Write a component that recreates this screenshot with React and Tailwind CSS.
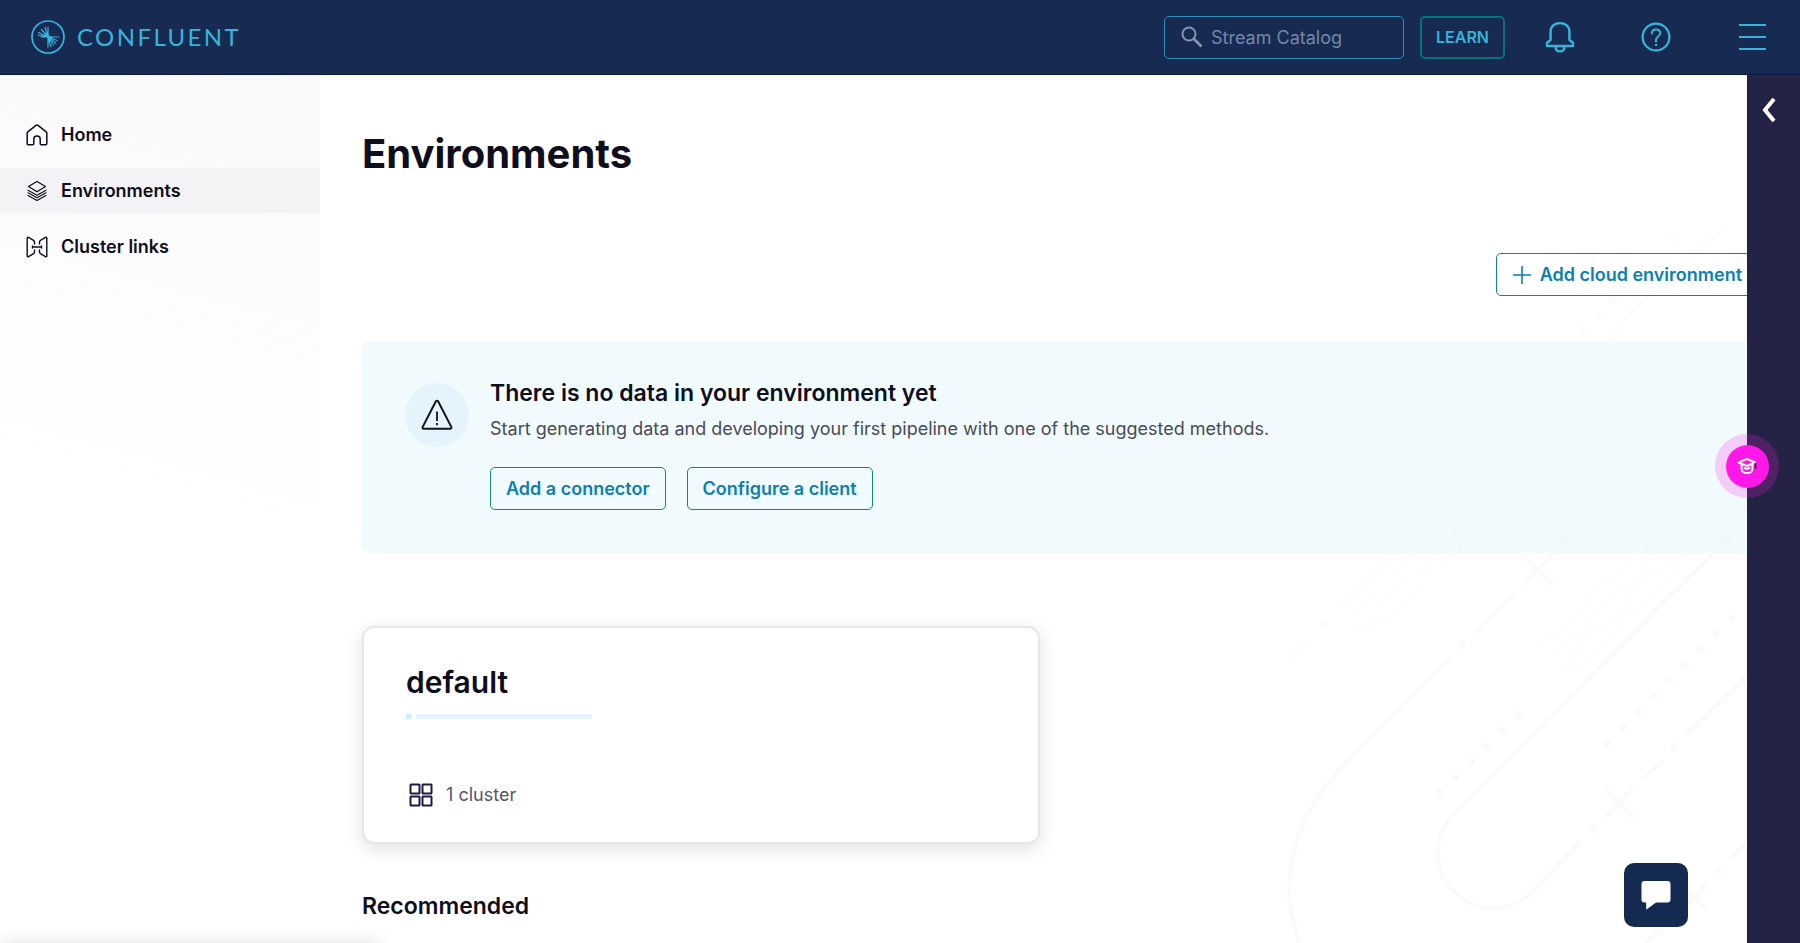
import React, { useState } from "react";

const navItems = [
  { name: "Home", icon: HomeIcon },
  { name: "Environments", icon: LayersIcon },
  { name: "Cluster links", icon: LinksIcon },
];

const environments = [{ name: "default", clusters: 1 }];

function Logo() {
  return (
    <svg width="34" height="34" viewBox="0 0 34 34" fill="none" stroke="currentColor">
      <circle cx="17" cy="17" r="16" strokeWidth="1.7" />
      <path
        d="M17 17V7M17 17L14 7.500M17 17L7.500 12.500M17 17L10.500 9.500M17 17L7 15M17 17H10M17 17V27M17 17L19.800 26.500M17 17L22.500 25M17 17L24.500 23M17 17L26 20.500M17 17H28"
        strokeWidth="1.200"
        strokeLinecap="round"
      />
      <path d="M13.500 14.500L17 12.500L18 16L22 17L19.500 19.500L17 18.500Z" fill="currentColor" stroke="none" />
    </svg>
  );
}

function HomeIcon() {
  return (
    <svg width="22" height="22" viewBox="0 0 22 22" fill="none" stroke="currentColor" strokeWidth="1.5" strokeLinejoin="round">
      <path d="M1.2 9.2C1.2 8.7 1.4 8.2 1.8 7.9L10 1.3a1.6 1.6 0 0 1 2 0l8.2 6.6c.4.3.6.8.6 1.3v10.600c0 .6-.4 1-1 1h-4.600c-.6 0-1-.4-1-1V15c0-1.800-1.200-2.900-3.200-2.900S7.800 13.200 7.800 15v4.800c0 .6-.4 1-1 1H2.200c-.6 0-1-.4-1-1z" />
    </svg>
  );
}

function LayersIcon() {
  return (
    <svg width="22" height="22" viewBox="0 0 22 22" fill="none" stroke="currentColor" strokeWidth="1.300" strokeLinejoin="round" strokeLinecap="round">
      <path d="M11 1.500l8.500 5-8.500 5.300-8.500-5.300z" />
      <path d="M2 10.200l9 5 9-5M2 12.800l9 5 9-5M2 15.400l9 5 9-5" strokeWidth="1.100" />
    </svg>
  );
}

function LinksIcon() {
  return (
    <svg width="22" height="22" viewBox="0 0 22 22" fill="none" stroke="currentColor" strokeWidth="1.400" strokeLinejoin="round" strokeLinecap="round">
      <path d="M8.500 8V6.200c0-.8-.4-1.500-1-1.900L2.600 1.400C1.800.9 1.200 1.300 1.200 2.100v17.800c0 .8.6 1.200 1.400.7l4.900-2.900c.6-.4 1-1.100 1-1.900V14" />
      <path d="M13.500 8V6.200c0-.8.4-1.500 1-1.900l4.900-2.900c.8-.5 1.400-.1 1.400.7v17.800c0 .8-.6 1.200-1.400.7l-4.900-2.900c-.6-.4-1-1.100-1-1.900V14" />
      <path d="M6.500 11h9M6.500 10v2M15.500 10v2" />
    </svg>
  );
}

function SearchIcon() {
  return (
    <svg width="22" height="22" viewBox="0 0 22 22" fill="none" stroke="currentColor" strokeWidth="2" className="shrink-0">
      <circle cx="8" cy="8" r="6.5" />
      <path d="M12.500 12.500L20.500 20.500" strokeWidth="2.600" />
    </svg>
  );
}

function BellIcon() {
  return (
    <svg width="30" height="32" viewBox="0 0 30 32" fill="none" stroke="currentColor" strokeWidth="2.400" strokeLinejoin="round">
      <path d="M2 25v-3.200l3.600-2.800V10.500C5.600 5.500 9.500 2 15 2s9.400 3.500 9.400 8.500V19l3.600 2.800V25z" />
      <path d="M10.500 25c0 3.200 1.700 5.400 4.500 5.400s4.500-2.200 4.500-5.400" />
    </svg>
  );
}

function HelpIcon() {
  return (
    <svg width="30" height="30" viewBox="0 0 30 30" fill="none" stroke="currentColor" strokeWidth="2.200">
      <circle cx="15" cy="15" r="13.400" />
      <path d="M10.800 11.400c0-2.400 1.700-4 4.200-4s4.300 1.500 4.300 3.800c0 3.400-4.300 3.200-4.300 6.600v1.700" strokeWidth="2" strokeLinecap="round" />
      <path d="M15 22v2" />
    </svg>
  );
}

function WarningIcon() {
  return (
    <svg width="32" height="32" viewBox="0 0 32 32" fill="none" stroke="currentColor" strokeWidth="2" strokeLinejoin="round">
      <path d="M14.900 2.300c.5-.9 1.700-.9 2.200 0l13.200 25.600c.4.900-.1 1.900-1.200 1.900H2.900c-1.100 0-1.600-1-1.200-1.900z" />
      <path d="M16 12.500v9.500M16 24v2.200" strokeWidth="1.800" />
    </svg>
  );
}

function ClusterIcon() {
  return (
    <svg width="24" height="24" viewBox="0 0 24 24" fill="none" stroke="currentColor" strokeWidth="2">
      <rect x="1.500" y="1.500" width="9" height="9" rx="0.500" />
      <rect x="13.500" y="1.500" width="9" height="9" rx="0.500" />
      <rect x="1.500" y="13.500" width="9" height="9" rx="0.500" />
      <rect x="13.500" y="13.500" width="9" height="9" rx="0.500" />
    </svg>
  );
}

function CapIcon() {
  return (
    <svg width="20" height="18" viewBox="0 0 20 18" fill="none" stroke="currentColor" strokeWidth="2" strokeLinejoin="round">
      <path d="M1.500 5.500L10 1.800l8 3.700L10 9z" />
      <path d="M4.600 7v5.200C4.600 14.500 7 16 10 16s5.400-1.500 5.400-3.800V7" />
      <path d="M7 10.500c1 1.500 5 1.500 6 0" />
      <path d="M18.500 6v6" stroke="#5b1a5e" />
    </svg>
  );
}

function ChatIcon() {
  return (
    <svg width="30" height="30" viewBox="0 0 30 30" fill="currentColor">
      <path d="M3.500 1h23A3 3 0 0 1 29.500 4v15.500a3 3 0 0 1-3 3H15L5.200 29.800V22.500H3.500a3 3 0 0 1-3-3V4a3 3 0 0 1 3-3z" />
    </svg>
  );
}

// rows of small dots running diagonally up to the right
function Dots({ rows, count, step, r }) {
  return rows.map(([x, y]) =>
    Array.from({ length: count }, (_, i) => (
      <circle key={`${x}-${i}`} cx={x + i * step} cy={y - i * step} r={r} fill="currentColor" stroke="none" />
    ))
  );
}

function Squares({ x, y, count }) {
  return Array.from({ length: count }, (_, i) => (
    <path key={i} d={`M${x + i * 15.6} ${y - i * 15.6}m-5 0l5-5 5 5-5 5z`} fill="currentColor" stroke="none" />
  ));
}

function Backdrop() {
  return (
    <svg
      className="absolute right-0 top-0 pointer-events-none text-black/[0.02]"
      width="600"
      height="868"
      viewBox="1200 75 600 868"
      fill="none"
      stroke="currentColor"
      strokeWidth="4"
      aria-hidden="true"
    >
      <path d="M1299 943C1292 918 1289 904 1289 892C1289 840 1312 797 1345 764L1450 658M1475 632L1515 594" />
      <path d="M1523 556L1552 584M1552 556L1523 584" />
      <path d="M1712 554L1454 814A55 55 0 0 0 1532 892L1581 841M1642 780L1663 760M1686 735L1746 677" />
      <path d="M1605 788L1633 817M1633 788L1605 817" />
      <path d="M1680 911L1708 883M1680 883L1708 911M1731 858L1746 843M1645 943L1663 929" />
      <circle cx="1462" cy="645" r="4" fill="currentColor" stroke="none" />
      <circle cx="1593" cy="829" r="4" fill="currentColor" stroke="none" />
      <circle cx="1674" cy="747" r="4" fill="currentColor" stroke="none" />
      <circle cx="1719" cy="870" r="4" fill="currentColor" stroke="none" />
      <Squares x={1440} y={793} count={6} />
      <Squares x={1607} y={743} count={9} />
      <g opacity="0.5">
        <path d="M1561 545L1626 481M1342 607L1470 480M1288 660L1308 643M1605 340L1640 303L1722 230M1726 525L1746 506" strokeWidth="3" />
        <circle cx="1325" cy="624" r="3" fill="currentColor" stroke="none" />
        <circle cx="1725" cy="539" r="4" fill="currentColor" stroke="none" />
        <Dots rows={[[1543, 647], [1558, 652], [1562, 666], [1576, 671]]} count={14} step={9.4} r={2} />
        <Dots rows={[[1356, 612], [1360, 626], [1375, 631]]} count={11} step={9.4} r={1.6} />
        <Dots rows={[[1582, 331]]} count={3} step={15.6} r={4} />
        <circle cx="1674" cy="238" r="4" fill="currentColor" stroke="none" />
      </g>
    </svg>
  );
}

function OutlineButton({ children }) {
  return (
    <button className="flex h-[43px] shrink-0 items-center gap-2 rounded-[5px] border border-[#12838d] px-[15px] text-lg font-semibold text-[#0a80b3] hover:bg-[#e3f5fb]">
      {children}
    </button>
  );
}

function Header() {
  return (
    <header className="flex h-[75px] shrink-0 items-center justify-between border-b border-[#0b1740] bg-[#172b52] pl-[31px] pr-[34px] text-[#38b4da]">
      <a href="#home" className="flex items-center gap-3">
        <Logo />
        <span className="font-['Lato',sans-serif] text-2xl leading-none tracking-widest">CONFLUENT</span>
      </a>
      <div className="flex items-center">
        <label className="flex h-[43px] w-60 items-center gap-2 rounded-[5px] border border-[#2f8fb8] px-4 text-[#8494ae]">
          <SearchIcon />
          <input
            aria-label="Stream Catalog"
            placeholder="Stream Catalog"
            className="w-full min-w-0 bg-transparent pt-0.5 text-lg outline-none placeholder:text-[#7487a6]"
          />
        </label>
        <button className="ml-4 h-[43px] w-[85px] rounded-[5px] border-2 border-[#08707c] text-base font-semibold">
          LEARN
        </button>
        <button aria-label="Notifications" className="ml-10">
          <BellIcon />
        </button>
        <button aria-label="Help" className="ml-[66px]">
          <HelpIcon />
        </button>
        <button aria-label="Menu" className="ml-[68px] flex w-[27px] flex-col gap-[10px]">
          <span className="h-0.5 w-full bg-current" />
          <span className="h-0.5 w-full bg-current" />
          <span className="h-0.5 w-full bg-current" />
        </button>
      </div>
    </header>
  );
}

function Sidebar({ active, onSelect }) {
  return (
    <aside className="w-80 shrink-0 bg-linear-195 from-[#f9f9fb] to-white to-50% pt-[37px]">
      <nav className="flex flex-col gap-[11px]">
        {navItems.map((item) => (
          <a
            key={item.name}
            href="#"
            onClick={() => onSelect(item.name)}
            className={`flex h-[45px] items-center gap-[13px] pl-[26px] text-lg font-semibold ${active === item.name ? "bg-[#f3f3f5]" : "hover:bg-[#f6f6f8]"}`}
          >
            <item.icon />
            {item.name}
          </a>
        ))}
      </nav>
    </aside>
  );
}

function EmptyBanner() {
  return (
    <section className="mt-[45px] flex h-[212px] gap-[21px] rounded-lg bg-[#f1fafd] px-[43px] pt-[34px]">
      <div className="mt-2 flex size-16 shrink-0 items-center justify-center rounded-full bg-[#e5f4fc] text-[#11131f]">
        <WarningIcon />
      </div>
      <div>
        <h2 className="text-[23px] leading-9 font-semibold">There is no data in your environment yet</h2>
        <p className="text-lg leading-9 text-[#4a4b55]">
          Start generating data and developing your first pipeline with one of the suggested methods.
        </p>
        <div className="mt-5 flex gap-[21px]">
          <OutlineButton>Add a connector</OutlineButton>
          <OutlineButton>Configure a client</OutlineButton>
        </div>
      </div>
    </section>
  );
}

function EnvironmentCard({ env }) {
  return (
    <article className="h-[218px] rounded-xl border-2 border-[#e7e7e9] bg-white px-[42px] pt-[34px] shadow-[0_5px_18px_rgba(0,0,0,0.12)]">
      <h3 className="text-3xl leading-10 font-semibold">{env.name}</h3>
      <div className="mt-3 flex gap-[5px]">
        <span className="h-[5px] w-[5px] bg-[#d3eff6]" />
        <span className="h-[5px] w-44 bg-[#e5f5fc]" />
      </div>
      <div className="mt-[62px] flex items-center gap-[13px] pl-[3px] text-[#1d1a44]">
        <ClusterIcon />
        <span className="text-lg text-[#55546f]">{env.clusters} cluster</span>
      </div>
    </article>
  );
}

export default function App() {
  const [active, setActive] = useState("Environments");

  return (
    <div className="relative flex h-screen flex-col overflow-hidden bg-white font-['Inter',sans-serif] text-[#0e0e1c]">
      <Header />
      <div className="relative flex min-h-0 flex-1">
        <Sidebar active={active} onSelect={setActive} />
        <main className="min-w-0 flex-1 overflow-hidden px-[42px] pt-[54px]">
          <h1 className="text-[40px] leading-[50px] font-bold">Environments</h1>
          <div className="mt-[74px] flex justify-end">
            <OutlineButton>
              <svg width="20" height="20" viewBox="0 0 20 20" stroke="currentColor" strokeWidth="1.600">
                <path d="M10 1v18M1 10h18" />
              </svg>
              Add cloud environment
            </OutlineButton>
          </div>
          <EmptyBanner />
          <div className="mt-[73px] grid grid-cols-2 gap-10">
            {environments.map((env) => (
              <EnvironmentCard key={env.name} env={env} />
            ))}
          </div>
          <h2 className="mt-11 text-[23px] leading-9 font-semibold">Recommended</h2>
        </main>
        <Backdrop />
        <button aria-label="Open chat" className="absolute bottom-4 right-28 flex size-16 items-center justify-center rounded-[10px] bg-[#152a50] text-white">
          <ChatIcon />
        </button>
        <div className="absolute inset-y-0 right-0 w-[53px] bg-[#252345]">
          <button aria-label="Expand panel" className="ml-[14px] mt-[22px] text-white">
            <svg width="16" height="26" viewBox="0 0 16 26" fill="none" stroke="currentColor" strokeWidth="4">
              <path d="M13 2L4 13l9 11" />
            </svg>
          </button>
        </div>
        <button aria-label="Tutorials" className="absolute right-[21px] top-[359px] flex size-16 items-center justify-center rounded-full bg-[#ff18e8]/20">
          <span className="flex size-[43px] items-center justify-center rounded-full bg-[#ff18e8] text-white">
            <CapIcon />
          </span>
        </button>
      </div>
      <div className="absolute left-0 top-full h-8 w-[380px] shadow-[0_0_18px_rgba(0,0,0,0.12)]" />
    </div>
  );
}
